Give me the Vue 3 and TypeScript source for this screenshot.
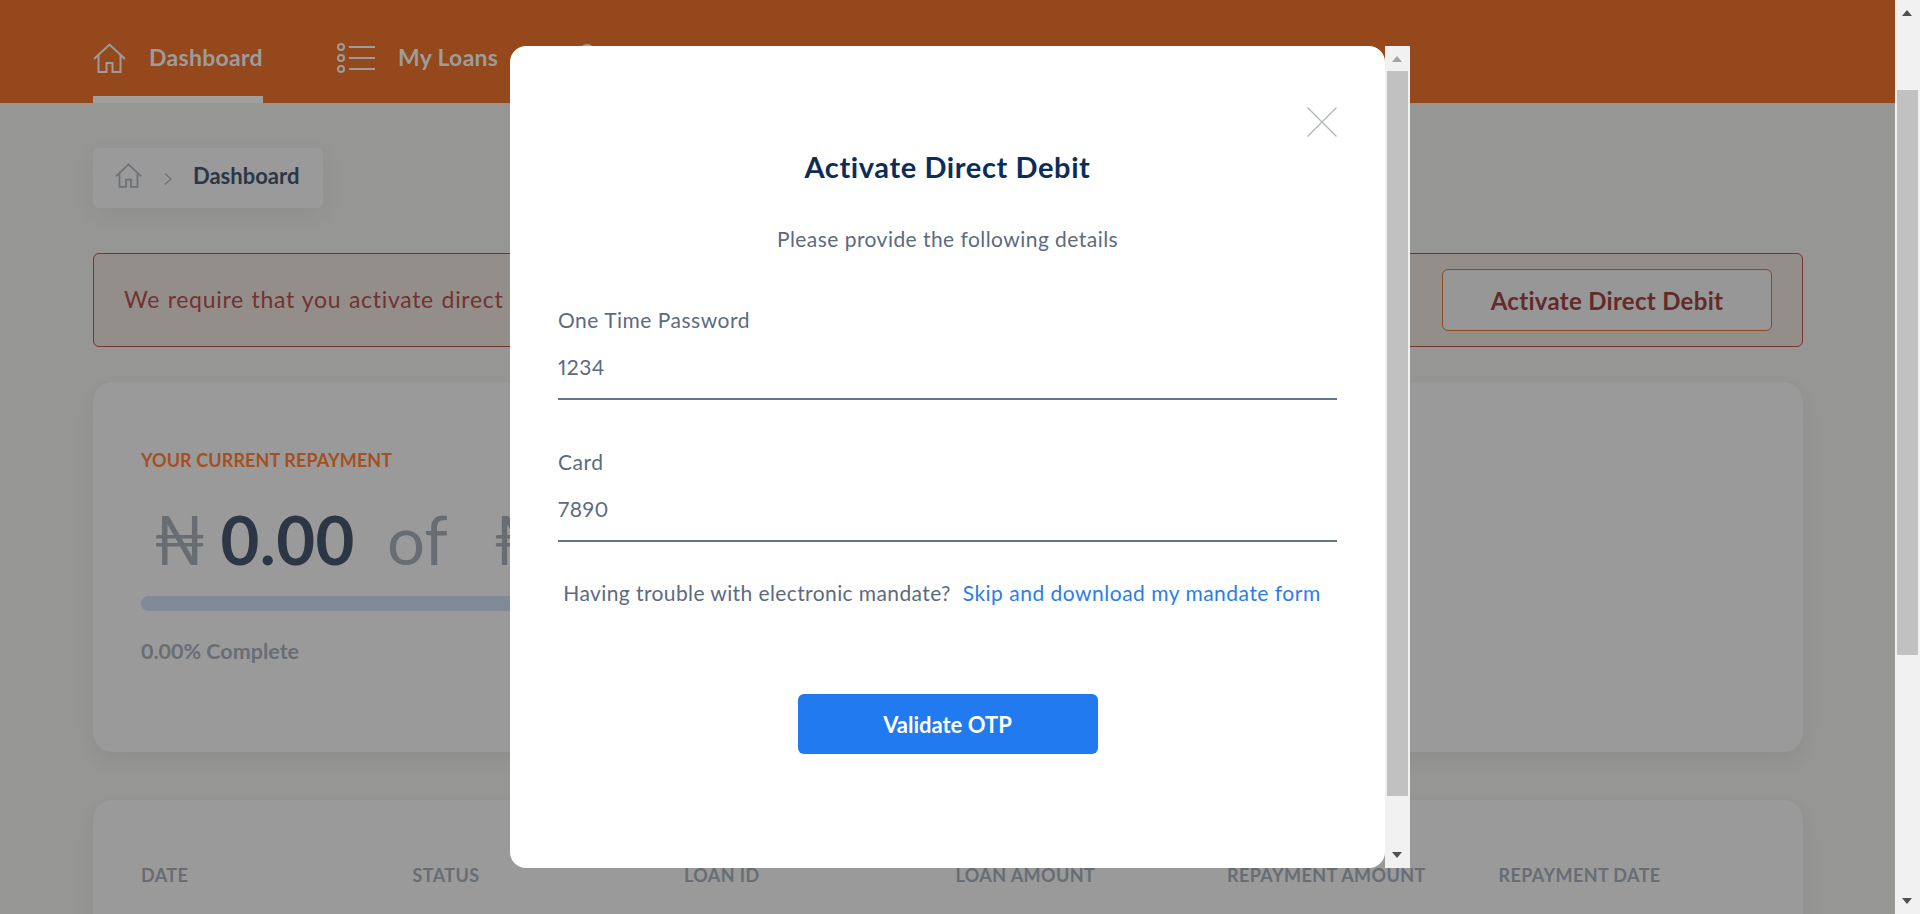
<template>
  <div class="page">
    <header class="topbar">
      <nav class="nav">
        <a class="nav-item active">
          <svg class="nav-icon" width="33" height="30" viewBox="0 0 33 30" fill="none" stroke="currentColor" stroke-width="2">
            <path :d="housePath" />
          </svg>
          <span>Dashboard</span>
        </a>
        <a class="nav-item">
          <svg class="nav-icon" width="38" height="30" viewBox="0 0 38 30" fill="none" stroke="currentColor" stroke-width="2">
            <circle cx="4" cy="4" r="3" />
            <circle cx="4" cy="15" r="3" />
            <circle cx="4" cy="26" r="3" />
            <path d="M12 4h26M12 15h26M12 26h26" />
          </svg>
          <span>My Loans</span>
        </a>
        <a class="nav-item">
          <svg class="nav-icon" width="30" height="30" viewBox="0 0 30 30" fill="none" stroke="currentColor" stroke-width="2">
            <circle cx="15" cy="9" r="7" />
            <path d="M2 29c1-8 6-12 13-12s12 4 13 12" />
          </svg>
          <span>Profile</span>
        </a>
      </nav>
    </header>

    <main class="content">
      <div class="breadcrumb">
        <svg width="27" height="25" viewBox="0 0 33 30" fill="none" stroke="#6d7278" stroke-width="2.2">
          <path :d="housePath" />
        </svg>
        <svg class="chevron" width="8" height="12" viewBox="0 0 8 12" fill="none" stroke="#6d7278" stroke-width="1.2">
          <path d="M1 .5 7 6l-6 5.5" />
        </svg>
        <span>Dashboard</span>
      </div>

      <section class="alert">
        <p>We require that you activate direct debit on your account to proceed with your loan</p>
        <button class="alert-btn" type="button">Activate Direct Debit</button>
      </section>

      <section class="card repayment">
        <h4>YOUR CURRENT REPAYMENT</h4>
        <div class="amount">
          <span class="naira">₦</span>
          <strong>0.00</strong>
          <span class="of">of</span>
          <span class="naira">₦</span>
          <strong>0.00</strong>
        </div>
        <div class="bar"></div>
        <p class="complete">0.00% Complete</p>
      </section>

      <section class="card table-card">
        <div class="table-head">
          <span v-for="col in columns" :key="col">{{ col }}</span>
        </div>
      </section>
    </main>

    <div class="scrollbar page-scroll">
      <i class="arrow up"></i>
      <div class="thumb"></div>
      <i class="arrow down"></i>
    </div>

    <div class="modal">
      <div class="modal-panel">
        <button class="close" type="button" aria-label="Close">
          <svg width="30" height="30" viewBox="0 0 30 30" fill="none" stroke="#aeb4bd" stroke-width="1.2">
            <path d="M.5.5l29 29M29.500.5l-29 29" />
          </svg>
        </button>
        <h2>Activate Direct Debit</h2>
        <p class="subtitle">Please provide the following details</p>

        <div v-for="field in fields" :key="field.label" class="field">
          <label>{{ field.label }}</label>
          <div class="value">{{ field.value }}</div>
        </div>

        <p class="trouble">
          Having trouble with electronic mandate?
          <a>Skip and download my mandate form</a>
        </p>

        <button class="validate" type="button">Validate OTP</button>
      </div>
      <div class="scrollbar modal-scroll">
        <i class="arrow up faded"></i>
        <div class="thumb"></div>
        <i class="arrow down"></i>
      </div>
    </div>
  </div>
</template>

<script setup lang="ts">
const housePath = 'M1 16 16.500 1.500 32 16M5.500 12v17h8v-9h6v9h8V12'

const columns: string[] = ['DATE', 'STATUS', 'LOAN ID', 'LOAN AMOUNT', 'REPAYMENT AMOUNT', 'REPAYMENT DATE']

const fields = [
  { label: 'One Time Password', value: '1234' },
  { label: 'Card', value: '7890' },
]
</script>

<style>
html,
body {
  margin: 0;
  overflow: hidden;
}
</style>

<style scoped>
.page {
  position: relative;
  width: 1920px;
  height: 914px;
  overflow: hidden;
  background: #969694;
  font-family: Lato, "Noto Sans", sans-serif;
}
.topbar {
  height: 103px;
  padding-left: 93px;
  box-sizing: border-box;
  background: #94481b;
}
.nav {
  display: flex;
  gap: 74px;
  height: 103px;
}
.nav-item {
  display: flex;
  align-items: flex-start;
  gap: 23px;
  height: 103px;
  box-sizing: border-box;
  padding-top: 43px;
  color: #9c9c9c;
  font-size: 23px;
  font-weight: 700;
  line-height: 29px;
  letter-spacing: 0.3px;
}
.nav-item.active {
  border-bottom: 7px solid #9f9f9f;
}
.content {
  padding: 45px 117px 0 93px;
}
.breadcrumb {
  display: flex;
  align-items: center;
  width: 230px;
  height: 60px;
  box-sizing: border-box;
  padding: 0 0 6px 22px;
  border-radius: 6px;
  background: #9a9a9a;
  box-shadow: 0 6px 24px rgba(0, 0, 0, 0.05);
  color: #2b3646;
  font-size: 22px;
  font-weight: 700;
}
.chevron {
  margin: 7px 21px 0 22px;
}
.alert {
  display: flex;
  align-items: center;
  justify-content: space-between;
  height: 94px;
  box-sizing: border-box;
  margin-top: 45px;
  padding: 0 30px;
  border: 1px solid #7a3434;
  border-radius: 6px;
  background: #938e8a;
  color: #733232;
}
.alert p {
  margin: 0 0 2px;
  font-size: 23px;
  letter-spacing: 0.7px;
  word-spacing: 1px;
}
.alert-btn {
  width: 330px;
  height: 62px;
  border: 1px solid #8f4a20;
  border-radius: 6px;
  background: #979797;
  color: #642a2a;
  font-family: inherit;
  font-size: 24px;
  font-weight: 700;
  letter-spacing: 0.3px;
}
.card {
  border-radius: 20px;
  background: #9a9a9a;
  box-shadow: 0 8px 20px rgba(0, 0, 0, 0.06);
  box-sizing: border-box;
}
.repayment {
  height: 370px;
  margin-top: 35px;
  padding: 66px 48px 0;
}
.repayment h4 {
  margin: 0;
  color: #a5501f;
  font-size: 18px;
  line-height: 24px;
  font-weight: 700;
  letter-spacing: 0.1px;
}
.amount {
  display: flex;
  align-items: baseline;
  gap: 14px;
  margin-top: 27px;
  padding-left: 12px;
  font-size: 67px;
  line-height: 80px;
  color: #676d73;
}
.amount strong {
  color: #2c3645;
  font-weight: 700;
  letter-spacing: 0.5px;
}
.amount .of {
  margin: 0 31px 0 18px;
}
.bar {
  width: 900px;
  height: 15px;
  margin-top: 17px;
  border-radius: 8px;
  background: #828a98;
}
.complete {
  margin: 28px 0 0;
  color: #6a6e74;
  font-size: 21.5px;
  line-height: 24px;
  font-weight: 700;
}
.table-card {
  height: 300px;
  margin-top: 48px;
  padding: 63px 48px 0;
}
.table-head {
  display: grid;
  grid-template-columns: repeat(6, 271.5px);
  color: #686d74;
  font-size: 18px;
  line-height: 24px;
  font-weight: 700;
  letter-spacing: 0.4px;
}
.scrollbar {
  position: relative;
  flex: none;
  width: 25px;
  background: #f1f1f1;
}
.page-scroll {
  position: absolute;
  top: 0;
  right: 0;
  height: 914px;
}
.thumb {
  position: absolute;
  left: 2px;
  right: 2px;
  background: #c1c1c1;
}
.page-scroll .thumb {
  top: 90px;
  height: 565px;
}
.modal-scroll .thumb {
  top: 25px;
  height: 725px;
}
.arrow {
  position: absolute;
  left: 7px;
  width: 0;
  height: 0;
  border-left: 5.5px solid transparent;
  border-right: 5.5px solid transparent;
}
.arrow.up {
  top: 10px;
  border-bottom: 6px solid #505050;
}
.arrow.up.faded {
  border-bottom-color: #a3a3a3;
}
.arrow.down {
  bottom: 10px;
  border-top: 6px solid #505050;
}
.modal {
  position: absolute;
  top: 46px;
  left: 510px;
  display: flex;
  width: 900px;
  height: 822px;
}
.modal-panel {
  position: relative;
  flex: 1;
  display: flex;
  flex-direction: column;
  align-items: center;
  box-sizing: border-box;
  padding: 104px 48px 0;
  border-radius: 16px;
  background: #fff;
  color: #5b6b80;
}
.close {
  position: absolute;
  top: 61px;
  right: 48px;
  width: 30px;
  height: 30px;
  padding: 0;
  border: 0;
  background: none;
}
.close svg {
  display: block;
}
.modal-panel h2 {
  margin: 0;
  color: #0c2d5a;
  font-size: 29px;
  line-height: 34px;
  font-weight: 700;
  letter-spacing: 0.6px;
}
.subtitle {
  margin: 43px 0 57px;
  font-size: 21px;
  line-height: 24px;
  letter-spacing: 0.45px;
}
.field {
  width: 100%;
  height: 142px;
  flex: none;
}
.field label {
  display: block;
  font-size: 21px;
  line-height: 24px;
  letter-spacing: 0.5px;
}
.value {
  height: 68px;
  padding-top: 23px;
  box-sizing: border-box;
  border-bottom: 2px solid #66758a;
  font-size: 21px;
  line-height: 24px;
  font-variant-numeric: proportional-nums;
  letter-spacing: 0.5px;
}
.trouble {
  margin: -11px 11px 0 0;
  font-size: 21px;
  line-height: 24px;
  letter-spacing: 0.4px;
  white-space: nowrap;
}
.trouble a {
  margin-left: 6px;
  color: #2a7de8;
  letter-spacing: 0.5px;
}
.validate {
  flex: none;
  width: 300px;
  height: 60px;
  margin-top: 89px;
  border: 0;
  border-radius: 6px;
  background: #217aef;
  color: #fff;
  font-family: inherit;
  font-size: 22px;
  font-weight: 700;
}
</style>
